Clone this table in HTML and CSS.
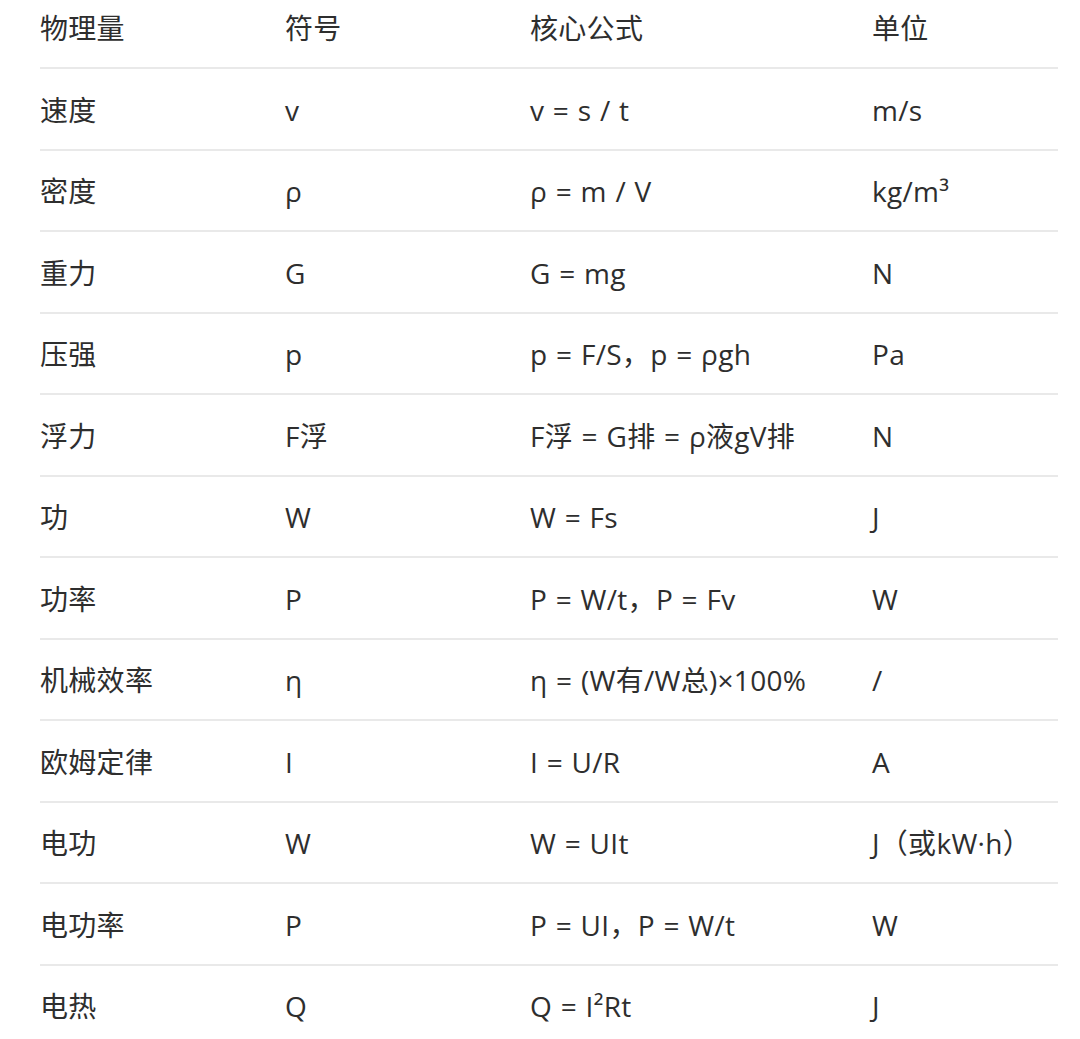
FILE: index.html
```html
<!DOCTYPE html>
<html lang="zh-CN">
<head>
<meta charset="utf-8">
<link rel="stylesheet" href="styles.css">
</head>
<body>
<table class="formula-table">
  <colgroup>
    <col class="c1"><col class="c2"><col class="c3"><col class="c4">
  </colgroup>
  <thead>
    <tr><th>物理量</th><th>符号</th><th>核心公式</th><th>单位</th></tr>
  </thead>
  <tbody>
    <tr><td>速度</td><td>v</td><td>v = s / t</td><td>m/s</td></tr>
    <tr><td>密度</td><td>ρ</td><td>ρ = m / V</td><td>kg/m³</td></tr>
    <tr><td>重力</td><td>G</td><td>G = mg</td><td>N</td></tr>
    <tr><td>压强</td><td>p</td><td>p = F/S，p = ρgh</td><td>Pa</td></tr>
    <tr><td>浮力</td><td>F浮</td><td>F浮 = G排 = ρ液gV排</td><td>N</td></tr>
    <tr><td>功</td><td>W</td><td>W = Fs</td><td>J</td></tr>
    <tr><td>功率</td><td>P</td><td>P = W/t，P = Fv</td><td>W</td></tr>
    <tr><td>机械效率</td><td>η</td><td>η = (W有/W总)×100%</td><td>/</td></tr>
    <tr><td>欧姆定律</td><td>I</td><td>I = U/R</td><td>A</td></tr>
    <tr><td>电功</td><td>W</td><td>W = UIt</td><td>J（或kW·h）</td></tr>
    <tr><td>电功率</td><td>P</td><td>P = UI，P = W/t</td><td>W</td></tr>
    <tr class="last"><td>电热</td><td>Q</td><td>Q = I²Rt</td><td>J</td></tr>
  </tbody>
</table>
</body>
</html>
```

FILE: styles.css
```css
html, body {
  margin: 0;
  padding: 0;
  background: #ffffff;
}
body {
  padding-left: 40px;
  font-family: "Open Sans", "Noto Sans CJK SC", sans-serif;
  color: #2e2e2e;
  font-size: 28px;
  line-height: 34px;
  letter-spacing: 0.3px;
  word-spacing: 1px;
}
.formula-table {
  width: 1018px;
  border-collapse: collapse;
  table-layout: fixed;
}
.c1 { width: 245px; }
.c2 { width: 245px; }
.c3 { width: 342px; }
.c4 { width: 186px; }
.formula-table th,
.formula-table td {
  padding: 0;
  text-align: left;
  font-weight: normal;
  white-space: nowrap;
  vertical-align: middle;
  border-bottom: 2px solid #e9e9e9;
}
.formula-table th {
  height: 54px;
  padding-top: 1px;
  padding-bottom: 12px;
}
.formula-table td {
  height: 77.5px;
  padding-top: 2px;
}
.formula-table tr.last td {
  border-bottom: none;
}
```
